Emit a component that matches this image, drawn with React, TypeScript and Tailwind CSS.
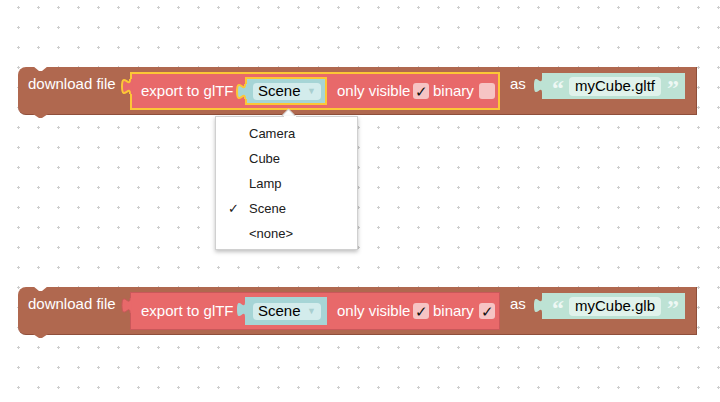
import React from "react";

const FONT = { fontFamily: '"Liberation Sans", Arial, sans-serif' };
const QFONT = { fontFamily: '"Liberation Serif", "Times New Roman", serif' };

function Tab({ fill, stroke, sw = 0, cover }: { fill: string; stroke?: string; sw?: number; cover: number }) {
  return (
    <svg
      className="absolute top-[5px] overflow-visible"
      style={{ left: -8 - cover }}
      width={8 + cover}
      height={15}
      viewBox={`0 0 ${8 + cover} 15`}
    >
      <rect x={8} y={0} width={cover + 0.5} height={15} fill={fill} />
      <path d="M8,0 C8,10 0,-8 0,7.5 S8,5 8,15" fill={fill} stroke={stroke || "none"} strokeWidth={sw} />
    </svg>
  );
}

function Checkbox({ checked }: { checked: boolean }) {
  return (
    <div className="w-[16px] h-[16px] rounded-[3px] bg-[#f6c4c4] flex items-center justify-center text-[15px] leading-none text-[#111]">
      {checked ? "✓" : ""}
    </div>
  );
}

function DownloadBlock({ top, file, binary, selected }: { top: number; file: string; binary: boolean; selected: boolean }) {
  return (
    <div className="absolute left-[18px] w-[679px] h-[48px]" style={{ top }}>
      <div className="relative h-full rounded-l-[8px] bg-[#b0684f] border-r border-b border-[#8f4f3b] flex items-start text-white text-[15px] leading-[18px]">
        <svg className="absolute top-[-1px] left-[15px]" width="15" height="6" viewBox="0 0 15 6">
          <path d="M0,0 L6,5 L9,5 L15,0 Z" fill="#ffffff" />
        </svg>
        <svg className="absolute top-full left-[15px]" width="15" height="5" viewBox="0 0 15 5">
          <path d="M0,0 L6,4 L9,4 L15,0 Z" fill="#b0684f" />
        </svg>
        <span className="ml-[10px] mt-[8px] w-[94px] whitespace-nowrap">download file</span>
        {/* red export block */}
        <div
          className={
            "relative ml-[8px] mt-[5px] w-[370px] h-[38px] bg-[#e8696a] flex items-center " +
            (selected ? "border-2 border-[#fcc736] pl-[9px]" : "border border-[#c9585a] pl-[10px]")
          }
        >
          <Tab fill="#e8696a" stroke={selected ? "#fcc736" : "#c9585a"} sw={selected ? 2 : 1} cover={selected ? 2 : 1} />
          <span className="w-[97px] whitespace-nowrap">export to glTF</span>
          {/* teal dropdown block */}
          <div
            className={
              "relative ml-[7px] w-[82px] h-[28px] bg-[#a6d5d6] flex items-center " +
              (selected ? "border-2 border-[#fcc736] pl-[6px]" : "pl-[8px]")
            }
          >
            <Tab fill="#a6d5d6" stroke={selected ? "#fcc736" : undefined} sw={selected ? 2 : 0} cover={selected ? 2 : 0} />
            <div className="w-[68px] h-[17px] rounded-[4px] bg-[#d3ecec] flex items-center pl-[5px] text-black">
              <span className="w-[49px]">Scene</span>
              <span className="text-[9px] text-[#a9cfd0]">▼</span>
            </div>
          </div>
          <span className="ml-[10px] w-[76px] whitespace-nowrap">only visible</span>
          <Checkbox checked={true} />
          <span className="ml-[4px] w-[46px] whitespace-nowrap">binary</span>
          <Checkbox checked={binary} />
        </div>
        <span className="ml-[10px] mt-[8px] w-[23px]">as</span>
        {/* string block */}
        <div className="relative ml-[9px] mt-[6px] w-[143px] h-[26px] bg-[#bde2d4] flex items-center pl-[10px]">
          <Tab fill="#bde2d4" cover={0} />
          <span className="w-[17px] h-[20px] text-[#eef8f4] font-bold text-[24px] leading-[24px]" style={QFONT}>“</span>
          <div className="h-[19px] rounded-[4px] bg-[#e0f2eb] flex items-center px-[6px] text-black">{file}</div>
          <span className="ml-[6px] h-[20px] text-[#eef8f4] font-bold text-[24px] leading-[24px]" style={QFONT}>”</span>
        </div>
      </div>
    </div>
  );
}

export default function App() {
  const items = ["Camera", "Cube", "Lamp", "Scene", "<none>"];
  return (
    <div className="relative w-[720px] h-[402px] bg-white overflow-hidden" style={FONT}>
      <svg className="absolute inset-0" width="720" height="402">
        <defs>
          <pattern id="grid" x="8" y="-3" width="20" height="20" patternUnits="userSpaceOnUse">
            <rect x="9" y="10" width="3" height="1" fill="#cdcdcd" />
            <rect x="10" y="9" width="1" height="3" fill="#cdcdcd" />
          </pattern>
        </defs>
        <rect width="720" height="402" fill="url(#grid)" />
      </svg>

      <DownloadBlock top={67} file="myCube.gltf" binary={false} selected={true} />
      <DownloadBlock top={287} file="myCube.glb" binary={true} selected={false} />

      {/* dropdown menu */}
      <div className="absolute left-[283px] top-[111px] w-[11px] h-[11px] rotate-45 bg-white border-l border-t border-[#d6d6d6]" />
      <div className="absolute left-[215px] top-[116px] w-[143px] h-[134px] bg-white border border-[#d0d0d0] shadow-[0_2px_4px_rgba(0,0,0,0.25)] py-[4px] text-[13px] text-[#202020]">
        {items.map((it) => (
          <div key={it} className="h-[25px] flex items-center">
            <span className="w-[33px] pl-[12px] text-[13px]">{it === "Scene" ? "✓" : ""}</span>
            <span>{it}</span>
          </div>
        ))}
      </div>
      <div className="absolute left-[284px] top-[116px] w-[12px] h-[3px] bg-white" />
    </div>
  );
}
